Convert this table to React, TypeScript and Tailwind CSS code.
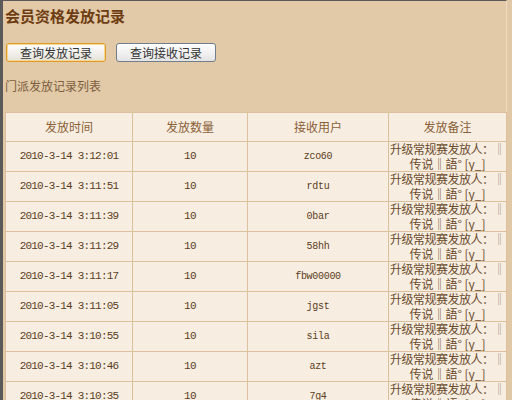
import React from "react";

const rows = [
  { time: "2010-3-14 3:12:01", user: "zco60" },
  { time: "2010-3-14 3:11:51", user: "rdtu" },
  { time: "2010-3-14 3:11:39", user: "0bar" },
  { time: "2010-3-14 3:11:29", user: "58hh" },
  { time: "2010-3-14 3:11:17", user: "fbw00000" },
  { time: "2010-3-14 3:11:05", user: "jgst" },
  { time: "2010-3-14 3:10:55", user: "sila" },
  { time: "2010-3-14 3:10:46", user: "azt" },
  { time: "2010-3-14 3:10:35", user: "7g4" },
  { time: "2010-3-14 3:10:24", user: "kkl" },
];

const cjk = { fontFamily: '"Noto Sans CJK SC", "Noto Sans", sans-serif' };
const mono = { fontFamily: '"Liberation Mono", "DejaVu Sans Mono", monospace' };

export default function App() {
  return (
    <div className="flex h-[400px] w-[512px] overflow-hidden bg-[#e0c8a6]">
      <div
        className="flex w-[507px] flex-col border-t border-l-[3px] border-r border-t-[#5a5a5a] border-l-[#5a5a5a] border-r-[#f2dcc0] bg-[#e2caa8] pl-[2px]"
        style={cjk}
      >
        <h1 className="mt-[5px] h-[20px] text-[15px] leading-[20px] font-bold text-[#6e3c12]">
          会员资格发放记录
        </h1>
        <div className="mt-[17px] flex gap-[10px] pl-[1px]">
          <button className="h-[19px] w-[100px] rounded-[3px] border border-[#e09a2a] bg-gradient-to-b from-white to-[#e6e2da] text-[12px] leading-[17px] text-[#333] shadow-[inset_0_0_0_1px_#f8d890]">
            查询发放记录
          </button>
          <button className="h-[19px] w-[100px] rounded-[3px] border border-[#6f7d8c] bg-gradient-to-b from-white to-[#e4e4e4] text-[12px] leading-[17px] text-[#333]">
            查询接收记录
          </button>
        </div>
        <div className="mt-[16px] h-[16px] text-[12px] leading-[16px] text-[#7c5c3c]">
          门派发放记录列表
        </div>
        <table className="mt-[18px] w-[501px] table-fixed border-collapse border border-[#a88a66] bg-[#f7eee1] text-[12px] text-[#5c3d22]">
          <colgroup>
            <col className="w-[127px]" />
            <col className="w-[115px]" />
            <col className="w-[141px]" />
            <col className="w-[118px]" />
          </colgroup>
          <thead>
            <tr className="h-[29px] text-[#8a6038]">
              <th className="border border-[#dcc09c] p-0 font-normal">发放时间</th>
              <th className="border border-[#dcc09c] p-0 font-normal">发放数量</th>
              <th className="border border-[#dcc09c] p-0 font-normal">接收用户</th>
              <th className="border border-[#dcc09c] p-0 font-normal">发放备注</th>
            </tr>
          </thead>
          <tbody>
            {rows.map((r) => (
              <tr key={r.time} className="h-[29px]">
                <td className="border border-[#dcc09c] p-0 text-center text-[11px] tracking-[-0.8px]" style={mono}>
                  {r.time}
                </td>
                <td className="border border-[#dcc09c] p-0 text-center text-[11px] tracking-[-0.6px]" style={mono}>
                  10
                </td>
                <td className="border border-[#dcc09c] p-0 text-center text-[10px] tracking-[-0.3px]" style={mono}>
                  {r.user}
                </td>
                <td className="overflow-hidden border border-[#dcc09c] p-0 text-center text-[12px] leading-[14.5px] whitespace-nowrap text-[#6a4a2c]">
                  <div className="tracking-[-0.5px]">
                    升级常规赛发放人：<span className="text-[#9a8a7a]">‖</span>
                  </div>
                  <div>传说‖語° [y_]</div>
                </td>
              </tr>
            ))}
          </tbody>
        </table>
      </div>
    </div>
  );
}
